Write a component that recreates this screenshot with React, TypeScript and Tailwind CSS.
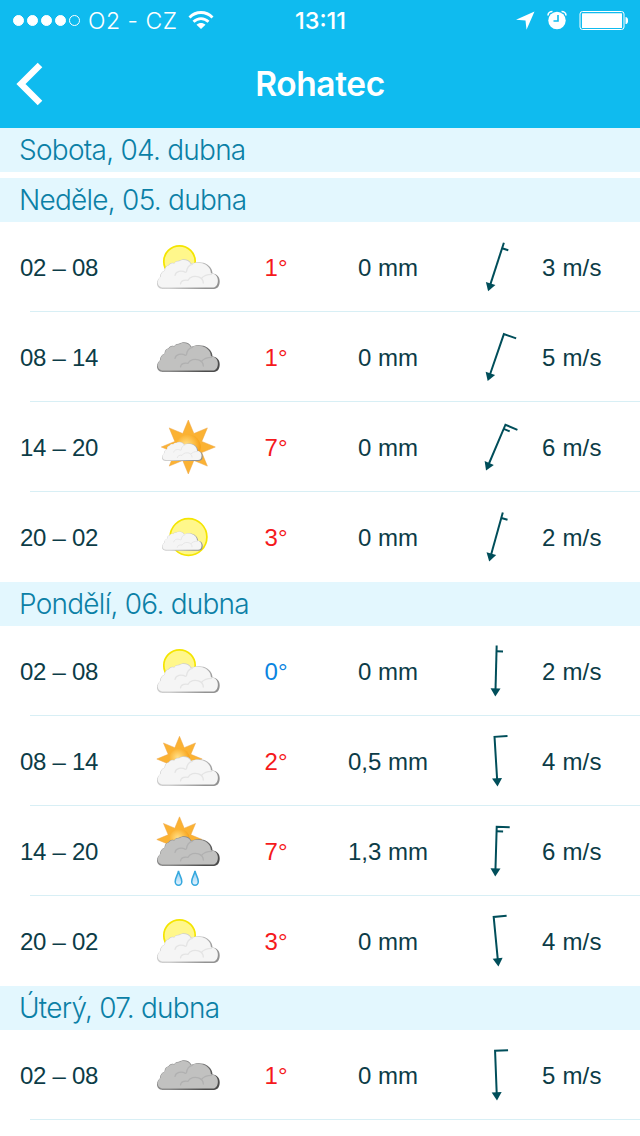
import { cva } from "class-variance-authority";
import clsx from "clsx";

type Sky = "night-cloudy" | "overcast" | "sunny" | "night-clear" | "sun-cloudy" | "sun-rain";

type Forecast = {
  time: string;
  sky: Sky;
  temp: number;
  rain: string;
  wind: number;
  angle: number;
};

type Day = {
  title: string;
  rows: Forecast[];
};

const days: Day[] = [
  { title: "Sobota, 04. dubna", rows: [] },
  {
    title: "Neděle, 05. dubna",
    rows: [
      { time: "02 – 08", sky: "night-cloudy", temp: 1, rain: "0 mm", wind: 3, angle: 18 },
      { time: "08 – 14", sky: "overcast", temp: 1, rain: "0 mm", wind: 5, angle: 19 },
      { time: "14 – 20", sky: "sunny", temp: 7, rain: "0 mm", wind: 6, angle: 23 },
      { time: "20 – 02", sky: "night-clear", temp: 3, rain: "0 mm", wind: 2, angle: 15.5 },
    ],
  },
  {
    title: "Pondělí, 06. dubna",
    rows: [
      { time: "02 – 08", sky: "night-cloudy", temp: 0, rain: "0 mm", wind: 2, angle: 1.5 },
      { time: "08 – 14", sky: "sun-cloudy", temp: 2, rain: "0,5 mm", wind: 4, angle: -3.5 },
      { time: "14 – 20", sky: "sun-rain", temp: 7, rain: "1,3 mm", wind: 6, angle: 1.7 },
      { time: "20 – 02", sky: "night-cloudy", temp: 3, rain: "0 mm", wind: 4, angle: -5.5 },
    ],
  },
  {
    title: "Úterý, 07. dubna",
    rows: [{ time: "02 – 08", sky: "overcast", temp: 1, rain: "0 mm", wind: 5, angle: -2.2 }],
  },
];

const CLOUD =
  "M5.7 29.6C2 29.6 0 27 0 24.5C0 21 1.5 19.5 3 18C3 14.5 5 12 7.5 11.5C7.5 8.5 9 6.5 11.5 6C12.5 4 15 2.8 17 4C18.5 1.8 20.5 1.2 22 1.5C26 -1 32 -.5 34.5 4.5C37 3 42 2.2 46.5 3.5C52 5.2 55.5 9.5 55.5 14.3C60 14.5 62.7 18 62.7 22C62.7 27 60.5 29.6 57 29.6Z";

function Gradients() {
  return (
    <svg className="absolute size-0" aria-hidden>
      <defs>
        <radialGradient id="core" cx=".42" cy=".42" r=".6">
          <stop offset="0" stopColor="#ffe08a" />
          <stop offset=".5" stopColor="#fdc04a" />
          <stop offset="1" stopColor="#f59d14" />
        </radialGradient>
        <linearGradient id="drop" x1="0" y1="0" x2="0" y2="1">
          <stop offset="0" stopColor="#8fcdf0" />
          <stop offset="1" stopColor="#e4f3ff" />
        </linearGradient>
        <linearGradient id="rim-light" x1="0" y1="0" x2="1" y2=".4">
          <stop offset="0" stopColor="#c8c8c8" />
          <stop offset=".5" stopColor="#cfcfcf" />
          <stop offset="1" stopColor="#929292" />
        </linearGradient>
        <linearGradient id="rim-dark" x1="0" y1="0" x2="1" y2=".4">
          <stop offset="0" stopColor="#8a8a8a" />
          <stop offset=".5" stopColor="#8a8a8a" />
          <stop offset="1" stopColor="#4c4c4c" />
        </linearGradient>
      </defs>
    </svg>
  );
}

function Cloud({ x, y, scale = 1, dark = false }: { x: number; y: number; scale?: number; dark?: boolean }) {
  return (
    <g transform={`translate(${x} ${y}) scale(${scale})`}>
      <path d={CLOUD} fill={dark ? "url(#rim-dark)" : "url(#rim-light)"} />
      <path d={CLOUD} transform="translate(.8 .7) scale(.958 .933)" fill={dark ? "#c1c1c0" : "#f5f5f5"} />
      <g fill="none" stroke={dark ? "#b0b0b0" : "#e4e4e4"} strokeWidth="1.3" strokeLinecap="round">
        <path d="M18 16C19 12 24 10.8 28.5 13" />
        <path d="M29.5 12.5C30 8 32.5 5.5 35.5 5" />
        <path d="M23.5 24.5C24 21 27.5 20.5 31 21C33 17 38 16.5 41.5 17.5C44.5 18.5 46.3 20.8 46.3 23.8" />
        <path d="M44.5 19C46.5 16.5 50 15 54.5 15" />
      </g>
    </g>
  );
}

function Sun({ cx, cy, r }: { cx: number; cy: number; r: number }) {
  const points = Array.from({ length: 16 }, (_, i) => {
    const d = i % 2 ? r * 0.54 : r;
    const a = (i * Math.PI) / 8;
    return `${(cx + d * Math.sin(a)).toFixed(2)},${(cy - d * Math.cos(a)).toFixed(2)}`;
  }).join(" ");
  return (
    <g>
      <polygon points={points} fill="#fbb233" stroke="#eda545" strokeWidth=".5" />
      <circle cx={cx} cy={cy} r={r * 0.46} fill="url(#core)" />
    </g>
  );
}

function Moon({ cx, cy, r }: { cx: number; cy: number; r: number }) {
  return <circle cx={cx} cy={cy} r={r - 0.8} fill="#fff78b" stroke="#f4e500" strokeWidth="1.7" />;
}

function Drop({ x }: { x: number }) {
  return (
    <path
      d={`M${x} 65C${x + 0.7} 69 ${x + 3.3} 71.5 ${x + 3.3} 75.7A3.3 3.5 0 0 1 ${x - 3.3} 75.7C${x - 3.3} 71.5 ${x - 0.7} 69 ${x} 65Z`}
      fill="url(#drop)"
      stroke="#35a8de"
      strokeWidth="1.5"
    />
  );
}

function SkyIcon({ sky }: { sky: Sky }) {
  return (
    <svg viewBox="0 0 80 90" className="h-[90px] w-20">
      {sky === "night-cloudy" && (
        <>
          <Moon cx={31.5} cy={39.5} r={16.5} />
          <Cloud x={9} y={37.3} />
        </>
      )}
      {sky === "overcast" && <Cloud x={9} y={30.3} dark />}
      {sky === "sunny" && (
        <>
          <Sun cx={40.3} cy={45} r={27} />
          <Cloud x={14} y={39.7} scale={0.65} />
        </>
      )}
      {sky === "night-clear" && (
        <>
          <Moon cx={40.5} cy={45} r={19.2} />
          <Cloud x={14} y={39.4} scale={0.65} />
        </>
      )}
      {sky === "sun-cloudy" && (
        <>
          <Sun cx={31.5} cy={43} r={22.7} />
          <Cloud x={9} y={40.3} />
        </>
      )}
      {sky === "sun-rain" && (
        <>
          <Sun cx={31.5} cy={33.5} r={22.7} />
          <Cloud x={9} y={30.3} dark />
          <Drop x={30.5} />
          <Drop x={47} />
        </>
      )}
    </svg>
  );
}

// One long barb from 4 m/s up, a short one for the remaining 2-3 m/s.
function WindArrow({ speed, angle }: { speed: number; angle: number }) {
  const long = speed >= 4;
  const short = speed < 4 || speed >= 6;
  return (
    <svg viewBox="0 0 60 90" className="h-[90px] w-[60px]">
      <g transform={`rotate(${angle} 30 45)`} stroke="#004e5a" strokeWidth="2" fill="none">
        <path d={long ? "M43 20.8H30V64" : "M30 19.5V64"} />
        {short && <path d="M30 25.3H36.5" />}
        <path d="M25 62.3H35L30 70.5Z" fill="#004e5a" stroke="none" />
      </g>
    </svg>
  );
}

const temperature = cva("w-[60px] pt-0.5 text-center", {
  variants: {
    frost: { true: "text-[#0a84e0]", false: "text-[#f5191c]" },
  },
});

function ForecastRow({ row, last }: { row: Forecast; last: boolean }) {
  return (
    <li className="relative flex h-[90px] items-center pl-5 text-2xl text-[#0c3c47]">
      <span className="w-32 pt-0.5 tracking-[-0.3px]">{row.time}</span>
      <SkyIcon sky={row.sky} />
      <span className={clsx("ml-[18px]", temperature({ frost: row.temp <= 0 }))}>{row.temp}°</span>
      <span className="ml-[22px] w-[120px] pt-0.5 text-center">{row.rain}</span>
      <span className="ml-[18px]">
        <WindArrow speed={row.wind} angle={row.angle} />
      </span>
      <span className="ml-4 pt-0.5 tracking-[0.2px]">{row.wind} m/s</span>
      {!last && <span className="absolute right-0 bottom-0 left-[30px] h-px bg-[#d8eff5]" />}
    </li>
  );
}

function StatusBar() {
  return (
    <div className="grid h-10 grid-cols-3 items-center pr-3 pl-[13px]">
      <div className="flex items-center">
        <div className="flex gap-[3px]">
          {[0, 1, 2, 3, 4].map((i) => (
            <span key={i} className={clsx("size-[11px] rounded-full border border-white", i < 4 && "bg-white")} />
          ))}
        </div>
        <span className="ml-2 pt-0.5 font-['Inter'] text-[23px] font-light tracking-[0.5px] whitespace-nowrap">
          O2 - CZ
        </span>
        <svg viewBox="0 0 26 20" className="ml-[11px] h-5 w-[26px] shrink-0" fill="none" stroke="white" strokeWidth="2.8">
          <path d="M1.5 7.5C8 .8 18 .8 24.5 7.5" />
          <path d="M5.5 11.8C10 7.5 16 7.5 20.5 11.8" />
          <path d="M13 19L8.500 14.700C11 12.300 15 12.300 17.500 14.700Z" fill="white" stroke="none" />
        </svg>
      </div>
      <span className="pt-0.5 text-center font-['Inter'] text-[23.5px] font-medium">13:11</span>
      <div className="flex items-center justify-end">
        <svg viewBox="0 0 20 20" className="size-5" fill="white">
          <path d="M19.500 1.500L1 9.800L10.500 10.500L11.500 19.800Z" />
        </svg>
        <svg viewBox="0 0 20 20" className="ml-3 size-5">
          <circle cx="10" cy="10.5" r="8.7" fill="white" />
          <path d="M1 5.5C1 3 3 1.5 5.5 1.5M19 5.5C19 3 17 1.5 14.5 1.5" stroke="white" strokeWidth="1.6" fill="none" />
          <path d="M11 5V11H6.5" stroke="#0fbbef" strokeWidth="1.6" fill="none" />
        </svg>
        <svg viewBox="0 0 49 20" className="ml-3 h-5 w-[49px]">
          <rect x="1" y="1.5" width="44" height="18" rx="2.5" fill="none" stroke="white" strokeWidth="1" />
          <rect x="3" y="3.2" width="40" height="14.800" rx=".5" fill="white" />
          <path d="M46.500 7C50 7 50 14 46.500 14Z" fill="white" />
        </svg>
      </div>
    </div>
  );
}

export default function App() {
  return (
    <div className="h-[1136px] w-[640px] overflow-hidden bg-white font-['Liberation_Sans',sans-serif]">
      <Gradients />
      <header className="h-32 bg-[#0fbbef] text-white">
        <StatusBar />
        <div className="grid h-[88px] grid-cols-3 items-center px-[15px]">
          <svg viewBox="0 0 30 44" className="h-11 w-[30px]" fill="none" stroke="white" strokeWidth="6.500">
            <path d="M25 3L6 22L25 41" />
          </svg>
          <h1 className="text-center font-['Inter'] text-[33.5px] font-semibold tracking-[-0.4px]">Rohatec</h1>
        </div>
      </header>
      <main className="flex flex-col">
        {days.map((day, i) => (
          <section key={day.title} className={clsx(i === 1 && "mt-1.5")}>
            <h2 className="h-11 bg-[#e3f7fe] px-[19px] font-['Inter'] text-[28px] leading-[44px] font-light tracking-[-0.75px] text-[#0b80a6]">
              {day.title}
            </h2>
            <ul>
              {day.rows.map((row, j) => (
                <ForecastRow key={row.time} row={row} last={j === day.rows.length - 1 && i < days.length - 1} />
              ))}
            </ul>
          </section>
        ))}
      </main>
    </div>
  );
}
